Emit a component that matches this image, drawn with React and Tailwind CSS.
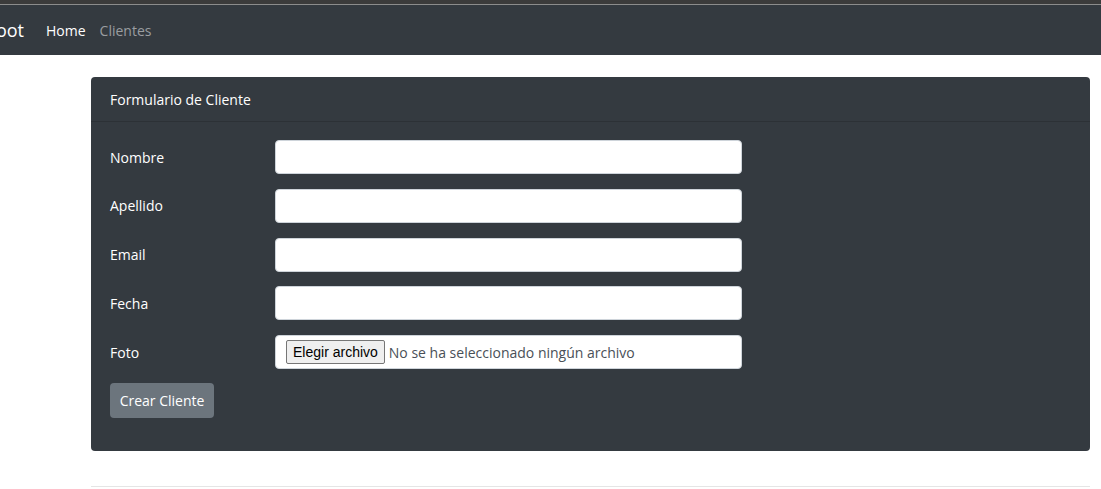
import React from "react";

const font = { fontFamily: '"Open Sans", "Noto Sans", Arial, sans-serif' };

function Row({ label, children, last }) {
  return (
    <div className={`flex items-center h-[34px] ${last ? "mb-[14px]" : "mb-[14.75px]"}`}>
      <div className="w-[165px] text-[14px] text-white">{label}</div>
      {children}
    </div>
  );
}

function TextInput() {
  return <div className="w-[467px] h-[34px] bg-white border border-[#ced4da] rounded-[4px]" />;
}

export default function App() {
  return (
    <div className="w-[1101px] h-[489px] bg-white overflow-hidden" style={font}>
      <div className="h-[4px] bg-[#3b3b3b]" />
      <div className="h-[1px] bg-[#8c8c8c]" />
      <nav className="h-[50px] bg-[#343a40] flex items-center">
        <span className="text-[18px] text-white ml-[-74px] mr-[22px] whitespace-nowrap">Spring Boot</span>
        <span className="text-[14px] text-white mr-[14px]">Home</span>
        <span className="text-[14px] text-[#9a9da0]">Clientes</span>
      </nav>
      <div className="pl-[91px] pr-[11px] pt-[22px]">
        <div className="bg-[#343a40] rounded-[4px]">
          <div className="h-[45px] flex items-center px-[19px] border-b border-[#2c3136] text-[14px] text-white">
            Formulario de Cliente
          </div>
          <div className="px-[19px] pt-[18px] pb-[33px]">
            <Row label="Nombre"><TextInput /></Row>
            <Row label="Apellido"><TextInput /></Row>
            <Row label="Email"><TextInput /></Row>
            <Row label="Fecha"><TextInput /></Row>
            <Row label="Foto" last>
              <div className="w-[467px] h-[34px] bg-white border border-[#ced4da] rounded-[4px] flex items-center pl-[10px]">
                <div
                  className="h-[24px] px-[6px] flex items-center bg-[#efefef] border border-[#767676] rounded-[2px] text-[14px] text-black"
                  style={{ fontFamily: '"Liberation Sans", Arial, sans-serif' }}
                >
                  Elegir archivo
                </div>
                <span className="ml-[4px] text-[14px] text-[#495057]">No se ha seleccionado ningún archivo</span>
              </div>
            </Row>
            <div className="w-[104px] h-[35px] bg-[#6c757d] rounded-[4px] flex items-center justify-center text-[14px] text-white">
              Crear Cliente
            </div>
          </div>
        </div>
        <div className="mt-[35px] h-[1px] bg-[#e5e5e5]" />
      </div>
    </div>
  );
}
